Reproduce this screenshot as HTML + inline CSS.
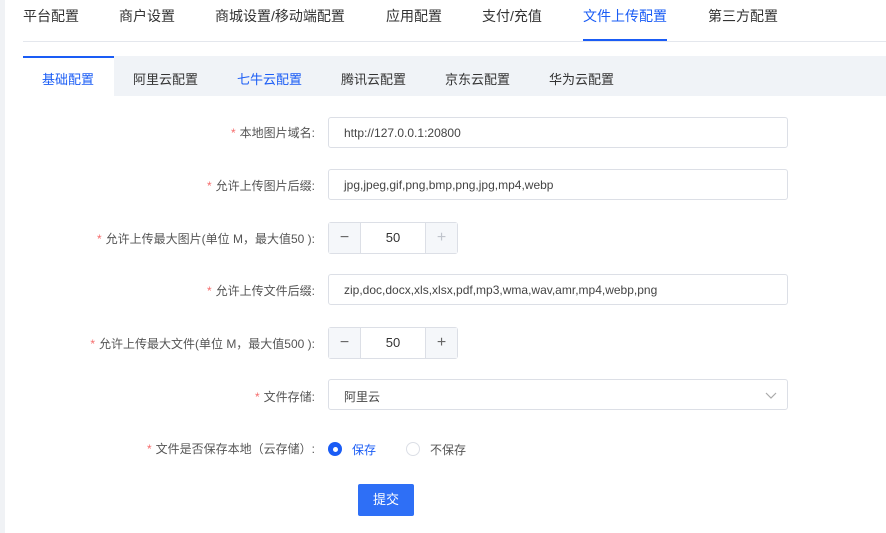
<!DOCTYPE html>
<html><head><meta charset="utf-8"><style>
*{box-sizing:border-box;margin:0;padding:0}
body{width:886px;height:533px;background:#fff;font-family:"Liberation Sans","Noto Sans CJK SC",sans-serif;color:#333;position:relative;overflow:hidden}
.strip{position:absolute;left:0;top:0;width:5px;height:533px;background:#f0f2f5}
.tabs{position:absolute;left:23px;top:0;right:0;height:42px;border-bottom:1px solid #e4e7ed}
.tab{position:absolute;top:6px;font-size:14px;color:#333;white-space:nowrap}
.tab.on{color:#1a5cf5}
.ink{position:absolute;left:583px;top:39px;width:84px;height:2px;background:#1a5cf5}
.sub{position:absolute;left:23px;top:56px;right:0;height:40px;background:#f0f3f7}
.st{position:absolute;top:69px;font-size:13px;color:#333;white-space:nowrap}
.st.on{color:#1a5cf5}
.subon{position:absolute;left:23px;top:56px;width:91px;height:40px;background:#fff;border-top:2px solid #1a5cf5}
.lab{position:absolute;right:571px;font-size:12px;color:#555;white-space:nowrap;text-align:right}
.lab b{color:#f56c6c;font-weight:normal;margin-right:4px}
.inp{position:absolute;left:328px;width:460px;height:31px;border:1px solid #dcdfe6;border-radius:3px;font-size:12px;color:#444;padding:8px 0 0 15px}
.num{position:absolute;left:328px;width:130px;height:32px;border:1px solid #dcdfe6;border-radius:3px;display:flex}
.num span{width:32px;background:#f5f7fa;text-align:center;font-size:16px;font-weight:300;line-height:29px;color:#666}
.num span:first-child{border-right:1px solid #dcdfe6}
.num span:last-child{border-left:1px solid #dcdfe6}
.num i{flex:1;font-style:normal;text-align:center;font-size:13px;line-height:30px;color:#333}
.btn{position:absolute;left:358px;top:484px;width:56px;height:32px;background:#2e6ff6;border-radius:2px;color:#fff;font-size:13px;text-align:center;line-height:32px}
</style></head><body>
<div class="strip"></div>
<div class="tabs"></div>
<div class="tab" style="left:23px">平台配置</div>
<div class="tab" style="left:119px">商户设置</div>
<div class="tab" style="left:215px">商城设置/移动端配置</div>
<div class="tab" style="left:386px">应用配置</div>
<div class="tab" style="left:482px">支付/充值</div>
<div class="tab on" style="left:583px">文件上传配置</div>
<div class="tab" style="left:708px">第三方配置</div>
<div class="ink"></div>
<div class="sub"></div>
<div class="subon"></div>
<div class="st on" style="left:42px">基础配置</div>
<div class="st" style="left:133px">阿里云配置</div>
<div class="st on" style="left:237px">七牛云配置</div>
<div class="st" style="left:341px">腾讯云配置</div>
<div class="st" style="left:445px">京东云配置</div>
<div class="st" style="left:549px">华为云配置</div>

<div class="lab" style="top:124px"><b>*</b>本地图片域名:</div>
<div class="inp" style="top:117px">http://127.0.0.1:20800</div>
<div class="lab" style="top:177px"><b>*</b>允许上传图片后缀:</div>
<div class="inp" style="top:169px">jpg,jpeg,gif,png,bmp,png,jpg,mp4,webp</div>
<div class="lab" style="top:230px"><b>*</b>允许上传最大图片(单位 M，最大值50 ):</div>
<div class="num" style="top:222px"><span>−</span><i>50</i><span style="color:#c0c4cc">+</span></div>
<div class="lab" style="top:282px"><b>*</b>允许上传文件后缀:</div>
<div class="inp" style="top:274px">zip,doc,docx,xls,xlsx,pdf,mp3,wma,wav,amr,mp4,webp,png</div>
<div class="lab" style="top:335px"><b>*</b>允许上传最大文件(单位 M，最大值500 ):</div>
<div class="num" style="top:327px"><span>−</span><i>50</i><span>+</span></div>
<div class="lab" style="top:388px"><b>*</b>文件存储:</div>
<div class="inp" style="top:379px">阿里云<svg style="position:absolute;right:10px;top:12px" width="12" height="7" viewBox="0 0 12 7"><path d="M1 1l5 5 5-5" fill="none" stroke="#aaa" stroke-width="1.2"/></svg></div>
<div class="lab" style="top:440px"><b>*</b>文件是否保存本地（云存储）:</div>
<div style="position:absolute;left:328px;top:442px;width:14px;height:14px;border-radius:50%;background:#1a5cf5"><div style="position:absolute;left:4.5px;top:4.5px;width:5px;height:5px;border-radius:50%;background:#fff"></div></div>
<div style="position:absolute;left:352px;top:441px;font-size:12px;color:#1a5cf5">保存</div>
<div style="position:absolute;left:406px;top:442px;width:14px;height:14px;border-radius:50%;border:1px solid #dcdfe6"></div>
<div style="position:absolute;left:430px;top:441px;font-size:12px;color:#555">不保存</div>
<div class="btn">提交</div>
</body></html>
